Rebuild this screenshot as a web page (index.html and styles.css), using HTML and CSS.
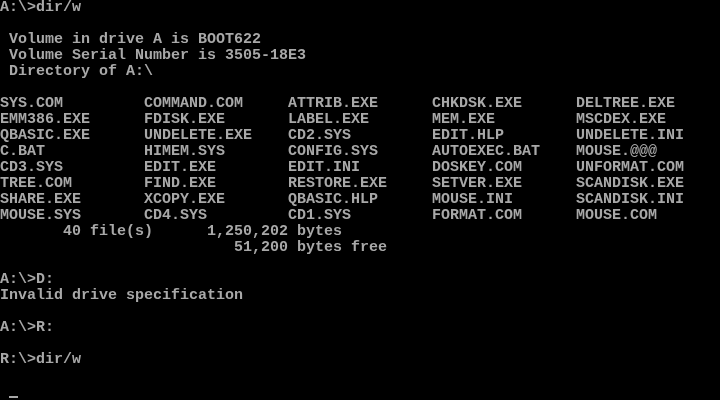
FILE: index.html
```html
<!DOCTYPE html>
<html lang="en">
<head>
    <meta charset="utf-8" />
    <title>MS-DOS</title>
    <link rel="stylesheet" href="styles.css">
</head>
<body>
    <div class="screen">
<pre class="console">A:\&gt;dir/w

 Volume in drive A is BOOT622
 Volume Serial Number is 3505-18E3
 Directory of A:\

SYS.COM         COMMAND.COM     ATTRIB.EXE      CHKDSK.EXE      DELTREE.EXE
EMM386.EXE      FDISK.EXE       LABEL.EXE       MEM.EXE         MSCDEX.EXE
QBASIC.EXE      UNDELETE.EXE    CD2.SYS         EDIT.HLP        UNDELETE.INI
C.BAT           HIMEM.SYS       CONFIG.SYS      AUTOEXEC.BAT    MOUSE.&#64;&#64;&#64;
CD3.SYS         EDIT.EXE        EDIT.INI        DOSKEY.COM      UNFORMAT.COM
TREE.COM        FIND.EXE        RESTORE.EXE     SETVER.EXE      SCANDISK.EXE
SHARE.EXE       XCOPY.EXE       QBASIC.HLP      MOUSE.INI       SCANDISK.INI
MOUSE.SYS       CD4.SYS         CD1.SYS         FORMAT.COM      MOUSE.COM
       40 file(s)      1,250,202 bytes
                          51,200 bytes free

A:\&gt;D:
Invalid drive specification

A:\&gt;R:

R:\&gt;dir/w

 <span class="cursor"></span></pre>
    </div>
</body>
</html>
```

FILE: styles.css
```css
html, body {
    margin: 0;
    padding: 0;
    background-color: #000;
}

.screen {
    width: 720px;
    height: 400px;
    overflow: hidden;
    background-color: #000;
}

.console {
    margin: 0;
    font-family: "Liberation Mono", "DejaVu Sans Mono", monospace;
    font-size: 15px;
    font-weight: bold;
    line-height: 16px;
    color: #a8a8a8;
    white-space: pre;
    will-change: transform;
}

.cursor {
    display: inline-block;
    width: 9px;
    height: 2px;
    background-color: #a8a8a8;
    vertical-align: -3px;
}
```
